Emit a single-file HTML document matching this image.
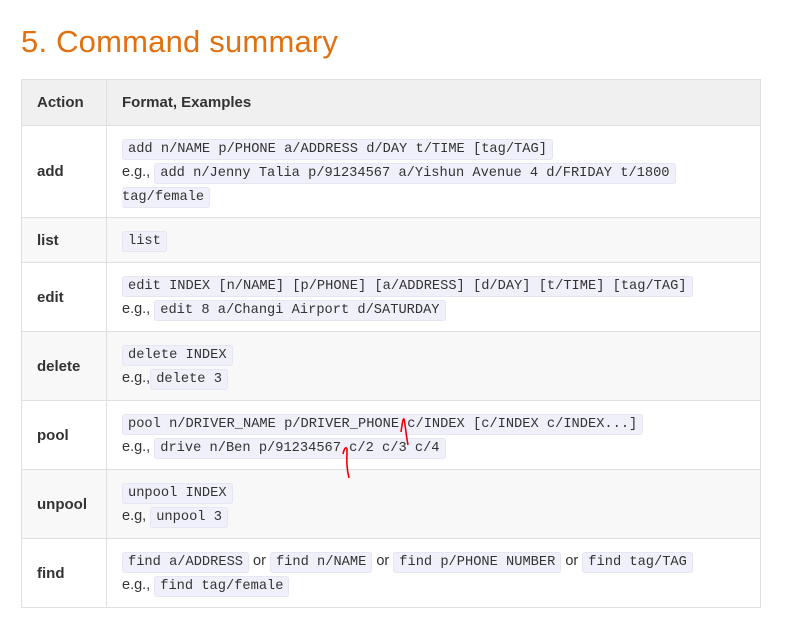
<!DOCTYPE html>
<html><head><meta charset="utf-8"><style>
*{margin:0;padding:0;box-sizing:border-box}
body{width:787px;height:625px;background:#fff;font-family:"Liberation Sans",sans-serif;color:#333;position:relative;overflow:hidden}
h2{position:absolute;left:21px;top:24px;font-size:31px;font-weight:normal;color:#e3700f;letter-spacing:0.2px}
table{position:absolute;left:21px;top:79px;width:740px;border-collapse:collapse;font-size:15px}
td,th{border:1px solid #dfdfdf;vertical-align:middle;text-align:left}
th{background:#f0f0f0;font-weight:bold;height:46px}
td:first-child,th:first-child{width:85px;padding-left:15px;font-weight:bold}
td:last-child,th:last-child{padding-left:15px}
tr.g td{background:#f8f8f8}
.c{line-height:24px;font-size:14.5px}
code{font-family:"Liberation Mono",monospace;font-size:13.7px;line-height:1;background:#f0f0fb;border:1px solid #e6e6f2;border-radius:3px;padding:2px 5px;color:#333}
</style></head><body>
<h2>5. Command summary</h2>
<table>
<tr><th>Action</th><th>Format, Examples</th></tr>
<tr style="height:92px"><td>add</td><td class="c"><code>add n/NAME p/PHONE a/ADDRESS d/DAY t/TIME [tag/TAG]</code><br>e.g., <code>add n/Jenny Talia p/91234567 a/Yishun Avenue 4 d/FRIDAY t/1800</code><br><code style="border-left:none;padding-left:0;margin-left:0">tag/female</code></td></tr>
<tr class="g" style="height:45px"><td>list</td><td class="c"><code>list</code></td></tr>
<tr style="height:69px"><td>edit</td><td class="c"><code>edit INDEX [n/NAME] [p/PHONE] [a/ADDRESS] [d/DAY] [t/TIME] [tag/TAG]</code><br>e.g., <code>edit 8 a/Changi Airport d/SATURDAY</code></td></tr>
<tr class="g" style="height:69px"><td>delete</td><td class="c"><code>delete INDEX</code><br>e.g.,<code>delete 3</code></td></tr>
<tr style="height:69px"><td>pool</td><td class="c"><code>pool n/DRIVER_NAME p/DRIVER_PHONE c/INDEX [c/INDEX c/INDEX...]</code><br>e.g., <code>drive n/Ben p/91234567 c/2 c/3 c/4</code></td></tr>
<tr class="g" style="height:69px"><td>unpool</td><td class="c"><code>unpool INDEX</code><br>e.g, <code>unpool 3</code></td></tr>
<tr style="height:69px"><td>find</td><td class="c"><code>find a/ADDRESS</code> or <code>find n/NAME</code> or <code>find p/PHONE NUMBER</code> or <code>find tag/TAG</code><br>e.g., <code>find tag/female</code></td></tr>
</table>
<svg style="position:absolute;left:0;top:0" width="787" height="625"><path d="M401 432 C402 425 403 418 404 419 C405 422 406 435 408 445" fill="none" stroke="#e00" stroke-width="1.6"/><path d="M343 454 C344 449 346 446 347 449 C347 458 346 466 349 478" fill="none" stroke="#e00" stroke-width="1.6"/></svg>
</body></html>
